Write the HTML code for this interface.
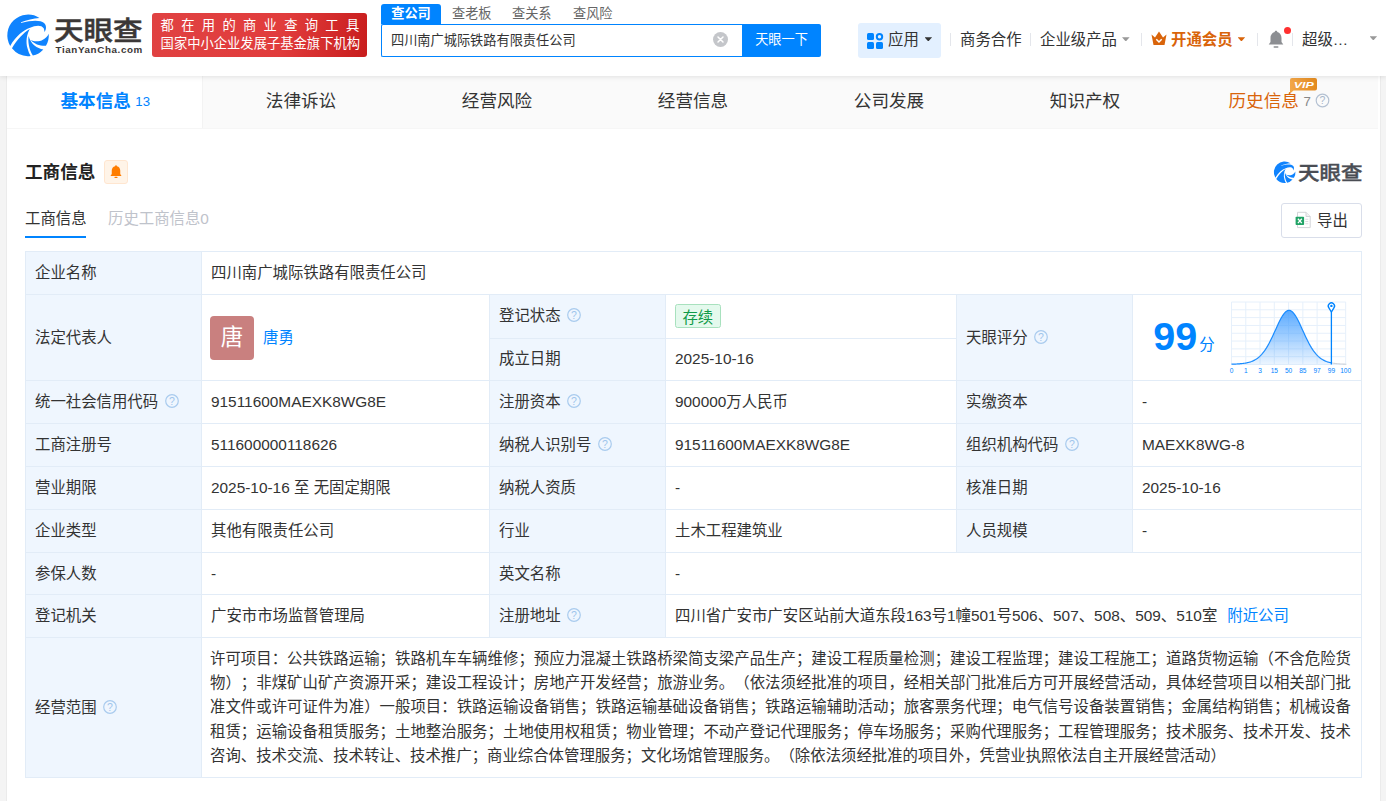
<!DOCTYPE html>
<html lang="zh-CN">
<head>
<meta charset="utf-8">
<title>四川南广城际铁路有限责任公司 - 天眼查</title>
<style>
*{box-sizing:border-box;margin:0;padding:0}
html,body{width:1386px;height:801px;overflow:hidden}
body{background:#f4f4f4;font-family:"Liberation Sans","Noto Sans CJK SC",sans-serif;color:#333;font-size:14px;position:relative}
.abs{position:absolute;white-space:nowrap}
/* header */
#hd{position:absolute;left:0;top:0;width:1386px;height:76px;background:#fff;box-shadow:0 1px 5px rgba(0,0,0,.10);z-index:5}
#logo-t{left:54px;top:12.5px;font-size:26.5px;line-height:36px;font-weight:500;-webkit-text-stroke:.5px #3b3736;color:#3b3736;transform:scaleX(1.115);transform-origin:0 0}
#logo-s{left:55.5px;top:44px;font-size:9.8px;line-height:12px;font-weight:700;color:#3b3736;letter-spacing:.62px}
#slogan{left:152px;top:13px;width:215px;height:44px;border-radius:3px;background:linear-gradient(100deg,#e04242 0%,#e13c3c 60%,#c81d1d 100%);color:#fff;font-size:13.3px;line-height:17.9px;padding:4.4px 0 0 8.6px}
#slogan .l1{letter-spacing:7.3px;display:block;height:17.9px}
#slogan .l2{letter-spacing:0;display:block;height:17.9px}
.stab{top:3.7px;height:20px;line-height:20px;font-size:13.2px;color:#666}
#stab1{left:381px;width:60px;background:#0084ff;color:#fff;text-align:center;border-radius:3px 3px 0 0;font-weight:700;top:4px;height:20px;line-height:19.4px}
#sinput{left:381px;top:24px;width:362px;height:33px;border:1px solid #0084ff;border-right:none;border-radius:2px 0 0 2px;background:#fff;font-size:13.2px;line-height:31px;padding-left:9px;color:#333}
#sbtn{left:742px;top:24px;width:79px;height:33px;background:#0084ff;border-radius:0 2px 2px 0;color:#fff;font-size:13.2px;line-height:32px;text-align:center}
#sclear{left:713px;top:32px;width:15px;height:15px;border-radius:50%;background:#c4c6ca}
#app{left:858px;top:23px;width:83px;height:35px;border-radius:3px;background:#e3f0ff}
.nav{top:29.5px;font-size:15.4px;line-height:20px;color:#333}
.sep{top:33px;width:1px;height:13px;background:#e4e6eb}
.caret{width:7.6px;height:4.2px;background:#999;clip-path:polygon(0 0,100% 0,50% 100%)}
/* tabs */
#wrap{position:absolute;left:6px;top:76px;width:1375px;height:725px;background:#fff;border-left:1px solid #ebebeb;border-right:1px solid #ebebeb}
#tabs{position:absolute;left:0;top:0;width:1371px;height:53px;background:#fafafa;border-bottom:1px solid #f6f6f6}
.tab{position:absolute;top:0;height:52px;width:196px;text-align:center;font-size:17.6px;line-height:50px;color:#333;white-space:nowrap}
.tab.on{background:#fff;color:#0084ff;font-weight:700;border-right:1px solid #f3f3f3;height:52px}
.tab .n{font-size:13.2px;font-weight:400;margin-left:4.5px;position:relative;top:-1px}

/* content */
#sec-t{left:25px;top:160px;font-size:17.6px;line-height:24px;font-weight:700;color:#222}
#bellbox{left:104px;top:160px;width:24px;height:24px;border:1px solid #ffe6d0;background:#fff4e8;border-radius:3px}
#sub1{left:25px;top:207.5px;font-size:15.4px;line-height:22px;color:#333}
#sub1u{left:25px;top:236px;width:61px;height:2px;background:#0084ff}
#sub2{left:108px;top:207.5px;font-size:15.4px;line-height:22px;color:#bfc3cb}
#wm-t{left:1298px;top:160px;font-size:19.3px;line-height:28px;font-weight:500;-webkit-text-stroke:.4px #4a4d54;color:#4a4d54;transform:scaleX(1.115);transform-origin:0 0}
#exp{left:1281px;top:203px;width:81px;height:35px;border:1px solid #d9deea;border-radius:3px;background:#fff}
#exp-t{left:1317px;top:211.2px;font-size:15.4px;line-height:20px;color:#333}
#tb{line-height:20px;position:absolute;left:25px;top:251px;width:1337px;height:527px;border-left:1px solid #e2ecf7;border-top:1px solid #e2ecf7;font-size:15.4px;color:#333}
.c{position:absolute;border-right:1px solid #e2ecf7;border-bottom:1px solid #e2ecf7;padding-left:9px;display:flex;align-items:center;white-space:nowrap;background:#fff}
.c.h{background:#eff6fe}
.q{display:inline-block;width:14px;height:14px;margin-left:6.5px;flex:none;position:relative;top:-.7px}
.lk{color:#0084ff}
#tag{display:inline-block;height:24px;line-height:19px;padding:3px 6.4px 0;border:1px solid #a8e1be;background:#e4f9ed;color:#0f9a48;border-radius:2.5px;font-size:15.4px}
#ava{width:44px;height:44px;border-radius:4px;background:#c9807f;color:#fff;font-size:22.5px;line-height:43px;text-align:center;margin-right:9px;flex:none}
#scope{white-space:normal;text-spacing-trim:space-all;text-align:justify;line-height:24.2px;width:1141px;display:block}
</style>
</head>
<body>
<div id="hd">
  <svg class="abs" style="left:0;top:8px" width="60" height="56" viewBox="0 0 858 801" fill="#0f83fe">
    <path d="M564 142 A297 297 0 0 0 146 542 C230 400 330 320 430 283 C500 250 590 235 625 290 C632 305 636 325 635 342 C665 310 668 250 630 215 C580 173 470 166 300 216 L300 203 C380 173 480 148 564 142 Z"/>
    <path d="M171 576 C246 448 336 352 426 299 C384 372 364 480 394 580 C404 620 419 655 437 686 A297 297 0 0 1 171 576 Z"/>
    <path d="M409 400 C396 482 416 590 470 681 A297 297 0 0 0 620 593 C530 576 442 520 409 400 Z"/>
    <path d="M440 456 C500 493 640 488 697 368 A297 297 0 0 1 657 541 C572 545 492 516 440 456 Z"/>
  </svg>
  <div class="abs" id="logo-t">天眼查</div>
  <div class="abs" id="logo-s">TianYanCha.com</div>
  <div class="abs" id="slogan"><span class="l1">都在用的商业查询工具</span><span class="l2">国家中小企业发展子基金旗下机构</span></div>

  <div class="abs stab" id="stab1">查公司</div>
  <div class="abs stab" style="left:452px">查老板</div>
  <div class="abs stab" style="left:512px">查关系</div>
  <div class="abs stab" style="left:573px">查风险</div>
  <div class="abs" id="sinput">四川南广城际铁路有限责任公司</div>
  <div class="abs" id="sclear"><svg width="15" height="15" viewBox="0 0 15 15" style="display:block"><path d="M5 5 L10 10 M10 5 L5 10" stroke="#fff" stroke-width="1.500" stroke-linecap="round"/></svg></div>
  <div class="abs" id="sbtn">天眼一下</div>

  <div class="abs" id="app"></div>
  <svg class="abs" style="left:867px;top:32.500px" width="17" height="17" viewBox="0 0 17 17">
    <rect x="0" y="0" width="7" height="7" rx="1.500" fill="#0084ff"/>
    <circle cx="12.500" cy="3.700" r="2.700" fill="none" stroke="#0084ff" stroke-width="2"/>
    <rect x="0" y="9" width="7" height="7" rx="1.500" fill="#0084ff"/>
    <rect x="9" y="9" width="7" height="7" rx="1.500" fill="#0084ff"/>
  </svg>
  <div class="abs nav" style="left:888px">应用</div>
  <div class="abs caret" style="left:924.500px;top:37.300px;background:#333"></div>
  <div class="abs sep" style="left:950px"></div>
  <div class="abs nav" style="left:960px">商务合作</div>
  <div class="abs sep" style="left:1030px"></div>
  <div class="abs nav" style="left:1040px">企业级产品</div>
  <div class="abs caret" style="left:1122px;top:37.300px"></div>
  <div class="abs sep" style="left:1141px"></div>
  <svg class="abs" style="left:1151px;top:31px" width="16" height="15" viewBox="0 0 16 15">
    <path d="M0.500 3.500 L4 6.500 L8 0.500 L12 6.500 L15.500 3.500 L13.500 14 L2.500 14 Z" fill="#d9640a"/>
    <path d="M5.300 8.300 L8 11 L10.700 8.300" fill="none" stroke="#fff" stroke-width="1.500"/>
  </svg>
  <div class="abs nav" style="left:1171px;color:#d9640a;font-weight:700">开通会员</div>
  <div class="abs caret" style="left:1237.600px;top:37.300px;background:#d9640a"></div>
  <div class="abs sep" style="left:1257px"></div>
  <svg class="abs" style="left:1268px;top:30px" width="16" height="19" viewBox="0 0 16 19">
    <path d="M8 0.800 C8.800 0.800 9.300 1.300 9.300 2 C12 2.700 13.500 5 13.500 8 L13.500 12 L15.300 14.500 L0.700 14.500 L2.500 12 L2.500 8 C2.500 5 4 2.700 6.700 2 C6.700 1.300 7.200 0.800 8 0.800 Z" fill="#8c8e92"/>
    <rect x="5.500" y="16.200" width="5" height="1.600" rx=".8" fill="#8c8e92"/>
  </svg>
  <div class="abs" style="left:1284px;top:27px;width:7px;height:7px;border-radius:50%;background:#ff3030"></div>
  <div class="abs sep" style="left:1292px"></div>
  <div class="abs nav" style="left:1302px">超级…</div>
  <div class="abs caret" style="left:1369.500px;top:36.200px"></div>
</div>

<div id="wrap">
  <div id="tabs">
    <div class="tab on" style="left:0;padding-left:1.500px">基本信息<span class="n">13</span></div>
    <div class="tab" style="left:196px">法律诉讼</div>
    <div class="tab" style="left:392px">经营风险</div>
    <div class="tab" style="left:588px">经营信息</div>
    <div class="tab" style="left:784px">公司发展</div>
    <div class="tab" style="left:980px">知识产权</div>
    <div class="tab" style="left:1176px;color:#d9640a;text-align:left;padding-left:45.500px">历史信息<span class="n" style="color:#888;margin-left:4.500px;font-size:13.200px;position:relative;top:-1.500px">7</span></div>
    <svg class="abs" style="left:1308px;top:17px" width="15" height="15" viewBox="0 0 15 15"><circle cx="7.500" cy="7.500" r="6.300" fill="none" stroke="#b4c1d2" stroke-width="1.200"/><text x="7.500" y="11.200" font-size="10.500" text-anchor="middle" fill="#a9b7ca" font-family="Liberation Sans,sans-serif">?</text></svg>
    <svg class="abs" style="left:1283px;top:2px" width="28" height="16" viewBox="0 0 28 16"><defs><linearGradient id="vg" x1="0" y1="0" x2="1" y2="0"><stop offset="0" stop-color="#f3a749"/><stop offset="1" stop-color="#e38a1e"/></linearGradient></defs><path d="M2 0 H25 Q27 0 27 2 V10.500 Q27 12.500 25 12.500 H3.600 L0 15.600 V2 Q0 0 2 0 Z" fill="url(#vg)"/><text x="13.800" y="10.400" font-size="9.600" font-weight="700" font-style="italic" text-anchor="middle" fill="#fff" font-family="Liberation Sans,sans-serif" textLength="20" lengthAdjust="spacingAndGlyphs">VIP</text></svg>
  </div>
</div>

  <div class="abs" id="sec-t">工商信息</div>
  <div class="abs" id="bellbox"><svg width="22" height="22" viewBox="0 0 22 22" style="display:block"><g transform="translate(11 10.800) scale(1.18) translate(-11 -10.800)"><path d="M11 5.200 C11.500 5.200 11.800 5.500 11.800 6 C13.600 6.400 14.600 7.900 14.600 9.800 L14.600 12.600 L15.700 14.300 L6.300 14.300 L7.400 12.600 L7.400 9.800 C7.400 7.900 8.400 6.400 10.200 6 C10.200 5.500 10.500 5.200 11 5.200 Z" fill="#ff7d00"/><rect x="9.600" y="14.900" width="2.800" height="1.200" rx=".6" fill="#ff7d00"/></g></svg></div>
  <div class="abs" id="sub1">工商信息</div>
  <div class="abs" id="sub1u"></div>
  <div class="abs" id="sub2">历史工商信息0</div>
  <svg class="abs" style="left:1270px;top:157.85px" width="31.3" height="29.2" viewBox="0 0 858 801" fill="#0f83fe">
    <path d="M564 142 A297 297 0 0 0 146 542 C230 400 330 320 430 283 C500 250 590 235 625 290 C632 305 636 325 635 342 C665 310 668 250 630 215 C580 173 470 166 300 216 L300 203 C380 173 480 148 564 142 Z"/>
    <path d="M171 576 C246 448 336 352 426 299 C384 372 364 480 394 580 C404 620 419 655 437 686 A297 297 0 0 1 171 576 Z"/>
    <path d="M409 400 C396 482 416 590 470 681 A297 297 0 0 0 620 593 C530 576 442 520 409 400 Z"/>
    <path d="M440 456 C500 493 640 488 697 368 A297 297 0 0 1 657 541 C572 545 492 516 440 456 Z"/>
  </svg>
  <div class="abs" id="wm-t">天眼查</div>
  <div class="abs" id="exp"></div>
  <svg class="abs" style="left:1294px;top:211px" width="18" height="18" viewBox="0 0 18 18">
    <path d="M3.500 1.300 L12 1.300 L16.200 5.500 L16.200 16.600 L3.500 16.600 Z" fill="#fff" stroke="#d2d4d8" stroke-width="1"/>
    <path d="M12 1.300 L12 5.500 L16.200 5.500" fill="#f2f2f2" stroke="#d2d4d8" stroke-width="1"/>
    <path d="M11.300 8.200 H14.300 M11.300 10.500 H14.300 M11.300 12.800 H14.300" stroke="#dcdde0" stroke-width="1.100"/>
    <rect x="1.600" y="5.800" width="8.500" height="8.300" rx=".8" fill="#21a366"/>
    <path d="M3.900 7.800 L7.800 12.100 M7.800 7.800 L3.900 12.100" stroke="#fff" stroke-width="1.300"/>
  </svg>
  <div class="abs" id="exp-t">导出</div>
  <div id="tb">
    <div class="c h" style="left:0px;top:0px;width:176px;height:43px">企业名称</div>
    <div class="c" style="left:176px;top:0px;width:1160px;height:43px">四川南广城际铁路有限责任公司</div>
    <div class="c h" style="left:0px;top:43px;width:176px;height:86px">法定代表人</div>
    <div class="c" style="left:176px;top:43px;width:288px;height:86px;padding-left:8px"><div id="ava">唐</div><span class="lk">唐勇</span></div>
    <div class="c h" style="left:464px;top:43px;width:176px;height:44px;padding-bottom:2px">登记状态<svg class="q" viewBox="0 0 14 14"><circle cx="7" cy="7" r="6.300" fill="none" stroke="#a9cbee" stroke-width="1.200"/><text x="7" y="10.700" font-size="10.500" text-anchor="middle" fill="#9fc5ec" font-family="Liberation Sans,sans-serif">?</text></svg></div>
    <div class="c" style="left:640px;top:43px;width:291px;height:44px;padding-bottom:1px"><span id="tag">存续</span></div>
    <div class="c h" style="left:464px;top:87px;width:176px;height:42px;padding-bottom:2px">成立日期</div>
    <div class="c" style="left:640px;top:87px;width:291px;height:42px;padding-bottom:2px">2025-10-16</div>
    <div class="c h" style="left:931px;top:43px;width:176px;height:86px">天眼评分<svg class="q" viewBox="0 0 14 14"><circle cx="7" cy="7" r="6.300" fill="none" stroke="#a9cbee" stroke-width="1.200"/><text x="7" y="10.700" font-size="10.500" text-anchor="middle" fill="#9fc5ec" font-family="Liberation Sans,sans-serif">?</text></svg></div>
    <div class="c" style="left:1107px;top:43px;width:229px;height:86px"><div class="abs" style="left:20.300px;top:19.200px;font-size:39.500px;line-height:44px;font-weight:700;color:#0084ff">99</div><div class="abs" style="left:66.300px;top:39.700px;font-size:15.400px;line-height:20px;color:#0084ff">分</div><svg class="abs" style="left:93px;top:3px" width="128" height="80" viewBox="1226 298 128 80">
<defs><linearGradient id="cg" x1="0" y1="0" x2="0" y2="1"><stop offset="0" stop-color="#3d9bff" stop-opacity=".85"/><stop offset="1" stop-color="#3d9bff" stop-opacity=".1"/></linearGradient></defs>
<path d="M1231.50 302.0 V364.5 M1245.77 302.0 V364.5 M1260.04 302.0 V364.5 M1274.31 302.0 V364.5 M1288.58 302.0 V364.5 M1302.85 302.0 V364.5 M1317.12 302.0 V364.5 M1331.39 302.0 V364.5 M1345.66 302.0 V364.5 M1231.5 302.00 H1345.66 M1231.5 309.81 H1345.66 M1231.5 317.62 H1345.66 M1231.5 325.44 H1345.66 M1231.5 333.25 H1345.66 M1231.5 341.06 H1345.66 M1231.5 348.88 H1345.66 M1231.5 356.69 H1345.66 M1231.5 364.50 H1345.66" stroke="#e6f0fb" stroke-width="1" fill="none"/>
<path d="M1231.5 364.22 L1232.5 364.19 L1233.5 364.15 L1234.5 364.11 L1235.5 364.06 L1236.5 364.01 L1237.5 363.95 L1238.5 363.89 L1239.5 363.81 L1240.5 363.72 L1241.5 363.62 L1242.5 363.51 L1243.5 363.38 L1244.5 363.24 L1245.5 363.07 L1246.5 362.89 L1247.5 362.67 L1248.5 362.43 L1249.5 362.16 L1250.5 361.84 L1251.5 361.49 L1252.5 361.09 L1253.5 360.64 L1254.5 360.14 L1255.5 359.58 L1256.5 358.94 L1257.5 358.24 L1258.5 357.46 L1259.5 356.59 L1260.5 355.64 L1261.5 354.59 L1262.5 353.45 L1263.5 352.21 L1264.5 350.86 L1265.5 349.40 L1266.5 347.84 L1267.5 346.18 L1268.5 344.42 L1269.5 342.55 L1270.5 340.60 L1271.5 338.57 L1272.5 336.47 L1273.5 334.31 L1274.5 332.12 L1275.5 329.90 L1276.5 327.69 L1277.5 325.49 L1278.5 323.35 L1279.5 321.28 L1280.5 319.32 L1281.5 317.49 L1282.5 315.81 L1283.5 314.31 L1284.5 313.03 L1285.5 311.97 L1286.5 311.16 L1287.5 310.61 L1288.5 310.33 L1289.5 310.33 L1290.5 310.61 L1291.5 311.16 L1292.5 311.97 L1293.5 313.03 L1294.5 314.31 L1295.5 315.81 L1296.5 317.49 L1297.5 319.32 L1298.5 321.28 L1299.5 323.35 L1300.5 325.49 L1301.5 327.69 L1302.5 329.90 L1303.5 332.12 L1304.5 334.31 L1305.5 336.47 L1306.5 338.57 L1307.5 340.60 L1308.5 342.55 L1309.5 344.42 L1310.5 346.18 L1311.5 347.84 L1312.5 349.40 L1313.5 350.86 L1314.5 352.21 L1315.5 353.45 L1316.5 354.59 L1317.5 355.64 L1318.5 356.59 L1319.5 357.46 L1320.5 358.24 L1321.5 358.94 L1322.5 359.58 L1323.5 360.14 L1324.5 360.64 L1325.5 361.09 L1326.5 361.49 L1327.5 361.84 L1328.5 362.16 L1329.5 362.43 L1330.5 362.67 L1331.4 362.87 L1331.4 364.5 L1231.5 364.5 Z" fill="url(#cg)"/>
<path d="M1331.4 362.87 L1332.4 363.06 L1333.4 363.22 L1334.4 363.37 L1335.4 363.50 L1336.4 363.61 L1337.4 363.71 L1338.4 363.80 L1339.4 363.88 L1340.4 363.95 L1341.4 364.01 L1342.4 364.06 L1343.4 364.11 L1344.4 364.15 L1345.4 364.18 L1346.4 364.22" stroke="#d0d4da" stroke-width="1.100" fill="none"/>
<path d="M1231.5 364.22 L1232.5 364.19 L1233.5 364.15 L1234.5 364.11 L1235.5 364.06 L1236.5 364.01 L1237.5 363.95 L1238.5 363.89 L1239.5 363.81 L1240.5 363.72 L1241.5 363.62 L1242.5 363.51 L1243.5 363.38 L1244.5 363.24 L1245.5 363.07 L1246.5 362.89 L1247.5 362.67 L1248.5 362.43 L1249.5 362.16 L1250.5 361.84 L1251.5 361.49 L1252.5 361.09 L1253.5 360.64 L1254.5 360.14 L1255.5 359.58 L1256.5 358.94 L1257.5 358.24 L1258.5 357.46 L1259.5 356.59 L1260.5 355.64 L1261.5 354.59 L1262.5 353.45 L1263.5 352.21 L1264.5 350.86 L1265.5 349.40 L1266.5 347.84 L1267.5 346.18 L1268.5 344.42 L1269.5 342.55 L1270.5 340.60 L1271.5 338.57 L1272.5 336.47 L1273.5 334.31 L1274.5 332.12 L1275.5 329.90 L1276.5 327.69 L1277.5 325.49 L1278.5 323.35 L1279.5 321.28 L1280.5 319.32 L1281.5 317.49 L1282.5 315.81 L1283.5 314.31 L1284.5 313.03 L1285.5 311.97 L1286.5 311.16 L1287.5 310.61 L1288.5 310.33 L1289.5 310.33 L1290.5 310.61 L1291.5 311.16 L1292.5 311.97 L1293.5 313.03 L1294.5 314.31 L1295.5 315.81 L1296.5 317.49 L1297.5 319.32 L1298.5 321.28 L1299.5 323.35 L1300.5 325.49 L1301.5 327.69 L1302.5 329.90 L1303.5 332.12 L1304.5 334.31 L1305.5 336.47 L1306.5 338.57 L1307.5 340.60 L1308.5 342.55 L1309.5 344.42 L1310.5 346.18 L1311.5 347.84 L1312.5 349.40 L1313.5 350.86 L1314.5 352.21 L1315.5 353.45 L1316.5 354.59 L1317.5 355.64 L1318.5 356.59 L1319.5 357.46 L1320.5 358.24 L1321.5 358.94 L1322.5 359.58 L1323.5 360.14 L1324.5 360.64 L1325.5 361.09 L1326.5 361.49 L1327.5 361.84 L1328.5 362.16 L1329.5 362.43 L1330.5 362.67 L1331.4 362.87" stroke="#1a8cff" stroke-width="1.200" fill="none"/>
<path d="M1331.4 308 V364.5" stroke="#0084ff" stroke-width="1.300"/>
<path d="M1331.4 312 L1328.900 307.900 A3.100 3.100 0 1 1 1333.900 307.900 Z" fill="#fff" stroke="#0084ff" stroke-width="1.400"/>
<circle cx="1331.4" cy="305.900" r="1.200" fill="#0084ff"/>
<g font-size="6.600" fill="#0084ff" font-family="Liberation Sans,sans-serif"><text x="1231.5" y="372.8" text-anchor="middle">0</text><text x="1245.8" y="372.8" text-anchor="middle">1</text><text x="1260.0" y="372.8" text-anchor="middle">3</text><text x="1274.3" y="372.8" text-anchor="middle">15</text><text x="1288.6" y="372.8" text-anchor="middle">50</text><text x="1302.8" y="372.8" text-anchor="middle">85</text><text x="1317.1" y="372.8" text-anchor="middle">97</text><text x="1331.4" y="372.8" text-anchor="middle">99</text><text x="1345.7" y="372.8" text-anchor="middle">100</text></g>
</svg></div>
    <div class="c h" style="left:0px;top:129px;width:176px;height:43px">统一社会信用代码<svg class="q" viewBox="0 0 14 14"><circle cx="7" cy="7" r="6.300" fill="none" stroke="#a9cbee" stroke-width="1.200"/><text x="7" y="10.700" font-size="10.500" text-anchor="middle" fill="#9fc5ec" font-family="Liberation Sans,sans-serif">?</text></svg></div>
    <div class="c" style="left:176px;top:129px;width:288px;height:43px">91511600MAEXK8WG8E</div>
    <div class="c h" style="left:464px;top:129px;width:176px;height:43px">注册资本<svg class="q" viewBox="0 0 14 14"><circle cx="7" cy="7" r="6.300" fill="none" stroke="#a9cbee" stroke-width="1.200"/><text x="7" y="10.700" font-size="10.500" text-anchor="middle" fill="#9fc5ec" font-family="Liberation Sans,sans-serif">?</text></svg></div>
    <div class="c" style="left:640px;top:129px;width:291px;height:43px">900000万人民币</div>
    <div class="c h" style="left:931px;top:129px;width:176px;height:43px">实缴资本</div>
    <div class="c" style="left:1107px;top:129px;width:229px;height:43px">-</div>
    <div class="c h" style="left:0px;top:172px;width:176px;height:43px">工商注册号</div>
    <div class="c" style="left:176px;top:172px;width:288px;height:43px">511600000118626</div>
    <div class="c h" style="left:464px;top:172px;width:176px;height:43px">纳税人识别号<svg class="q" viewBox="0 0 14 14"><circle cx="7" cy="7" r="6.300" fill="none" stroke="#a9cbee" stroke-width="1.200"/><text x="7" y="10.700" font-size="10.500" text-anchor="middle" fill="#9fc5ec" font-family="Liberation Sans,sans-serif">?</text></svg></div>
    <div class="c" style="left:640px;top:172px;width:291px;height:43px">91511600MAEXK8WG8E</div>
    <div class="c h" style="left:931px;top:172px;width:176px;height:43px">组织机构代码<svg class="q" viewBox="0 0 14 14"><circle cx="7" cy="7" r="6.300" fill="none" stroke="#a9cbee" stroke-width="1.200"/><text x="7" y="10.700" font-size="10.500" text-anchor="middle" fill="#9fc5ec" font-family="Liberation Sans,sans-serif">?</text></svg></div>
    <div class="c" style="left:1107px;top:172px;width:229px;height:43px">MAEXK8WG-8</div>
    <div class="c h" style="left:0px;top:215px;width:176px;height:43px">营业期限</div>
    <div class="c" style="left:176px;top:215px;width:288px;height:43px">2025-10-16 至 无固定期限</div>
    <div class="c h" style="left:464px;top:215px;width:176px;height:43px">纳税人资质</div>
    <div class="c" style="left:640px;top:215px;width:291px;height:43px">-</div>
    <div class="c h" style="left:931px;top:215px;width:176px;height:43px">核准日期</div>
    <div class="c" style="left:1107px;top:215px;width:229px;height:43px">2025-10-16</div>
    <div class="c h" style="left:0px;top:258px;width:176px;height:43px">企业类型</div>
    <div class="c" style="left:176px;top:258px;width:288px;height:43px">其他有限责任公司</div>
    <div class="c h" style="left:464px;top:258px;width:176px;height:43px">行业</div>
    <div class="c" style="left:640px;top:258px;width:291px;height:43px">土木工程建筑业</div>
    <div class="c h" style="left:931px;top:258px;width:176px;height:43px">人员规模</div>
    <div class="c" style="left:1107px;top:258px;width:229px;height:43px">-</div>
    <div class="c h" style="left:0px;top:301px;width:176px;height:42px">参保人数</div>
    <div class="c" style="left:176px;top:301px;width:288px;height:42px">-</div>
    <div class="c h" style="left:464px;top:301px;width:176px;height:42px">英文名称</div>
    <div class="c" style="left:640px;top:301px;width:696px;height:42px">-</div>
    <div class="c h" style="left:0px;top:343px;width:176px;height:43px">登记机关</div>
    <div class="c" style="left:176px;top:343px;width:288px;height:43px">广安市市场监督管理局</div>
    <div class="c h" style="left:464px;top:343px;width:176px;height:43px">注册地址<svg class="q" viewBox="0 0 14 14"><circle cx="7" cy="7" r="6.300" fill="none" stroke="#a9cbee" stroke-width="1.200"/><text x="7" y="10.700" font-size="10.500" text-anchor="middle" fill="#9fc5ec" font-family="Liberation Sans,sans-serif">?</text></svg></div>
    <div class="c" style="left:640px;top:343px;width:696px;height:43px">四川省广安市广安区站前大道东段163号1幢501号506、507、508、509、510室<span class="lk" style="margin-left:10px">附近公司</span></div>
    <div class="c h" style="left:0px;top:386px;width:176px;height:140px">经营范围<svg class="q" viewBox="0 0 14 14"><circle cx="7" cy="7" r="6.300" fill="none" stroke="#a9cbee" stroke-width="1.200"/><text x="7" y="10.700" font-size="10.500" text-anchor="middle" fill="#9fc5ec" font-family="Liberation Sans,sans-serif">?</text></svg></div>
    <div class="c" style="left:176px;top:386px;width:1160px;height:140px;padding-left:8px"><div id="scope">许可项目：公共铁路运输；铁路机车车辆维修；预应力混凝土铁路桥梁简支梁产品生产；建设工程质量检测；建设工程监理；建设工程施工；道路货物运输（不含危险货物）；非煤矿山矿产资源开采；建设工程设计；房地产开发经营；旅游业务。（依法须经批准的项目，经相关部门批准后方可开展经营活动，具体经营项目以相关部门批准文件或许可证件为准）一般项目：铁路运输设备销售；铁路运输基础设备销售；铁路运输辅助活动；旅客票务代理；电气信号设备装置销售；金属结构销售；机械设备租赁；运输设备租赁服务；土地整治服务；土地使用权租赁；物业管理；不动产登记代理服务；停车场服务；采购代理服务；工程管理服务；技术服务、技术开发、技术咨询、技术交流、技术转让、技术推广；商业综合体管理服务；文化场馆管理服务。（除依法须经批准的项目外，凭营业执照依法自主开展经营活动）</div></div>
  </div>

</body>
</html>
